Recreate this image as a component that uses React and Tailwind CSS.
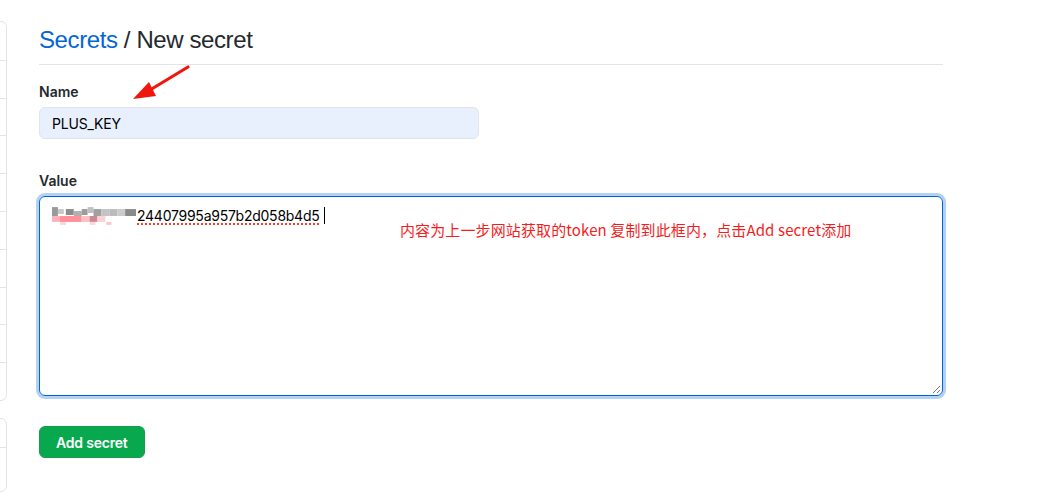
import React from "react";

const sans = "font-['Inter','Liberation_Sans','Noto_Sans_CJK_SC',sans-serif]";

const blurCells = [
  [0, 3, 6, 9, "#9a9a9a"],
  [6, 5, 6, 5, "#c8c8c8"],
  [14, 5, 8, 6, "#8c8c8c"],
  [22, 7, 8, 5, "#b0b0b0"],
  [30, 5, 6, 6, "#9c9c9c"],
  [36, 3, 6, 6, "#c0c0c0"],
  [42, 5, 8, 7, "#a0a0a0"],
  [50, 5, 8, 7, "#c4c4c4"],
  [58, 5, 8, 7, "#bbbbbb"],
  [66, 5, 8, 7, "#cbcbcb"],
  [74, 5, 11, 7, "#8a8a8a"],
  [0, 12, 8, 6, "#ffb3b8"],
  [8, 12, 22, 6, "#ff8f99"],
  [30, 12, 8, 6, "#ffc0c4"],
  [38, 12, 8, 6, "#c98a94"],
  [46, 12, 8, 6, "#ffd0d3"],
  [8, 18, 6, 3, "#ffd6d8"],
  [38, 18, 6, 3, "#ffd6d8"],
  [55, 18, 5, 3, "#ffc4c8"],
];

const Sidebar = () => (
  <div className="w-[7px] shrink-0 overflow-hidden pt-[21px]">
    <div className="w-[200px] -ml-[193px] rounded-md border border-[#e1e4e8]">
      {Array.from({ length: 10 }).map((_, i) => (
        <div
          key={i}
          className={`h-[37.8px] ${i > 0 ? "border-t border-[#e1e4e8]" : ""}`}
        />
      ))}
    </div>
    <div className="w-[200px] -ml-[193px] mt-[17px] rounded-md border border-[#e1e4e8]">
      <div className="h-[28px]" />
      <div className="h-[44px] border-t border-[#e1e4e8]" />
    </div>
  </div>
);

export default function App() {
  return (
    <div className={`relative flex w-[1044px] h-[500px] bg-white overflow-hidden text-[#24292e] ${sans}`}>
      <Sidebar />

      <main className="ml-[32px] w-[904px] pt-[22px]">
        <h2 className="font-['Liberation_Sans',sans-serif] text-[24px] leading-[36px] tracking-[-0.4px] pb-[6px] border-b border-[#e1e4e8]">
          <a className="text-[#0366d6]">Secrets</a> / New secret
        </h2>

        <label className="block mt-[16px] text-[14px] leading-[21px] font-semibold">
          Name
        </label>
        <div className="mt-[5px] w-[440px] h-[32px] flex items-center px-[12px] rounded-md border border-[#e1e4e8] bg-[#e8f0fe] text-[14px] tracking-[-0.2px] text-black">
          PLUS_KEY
        </div>

        <label className="block mt-[31px] text-[14px] leading-[21px] font-semibold">
          Value
        </label>
        <div className="relative mt-[5px] h-[200px] rounded-md border border-[#0366d6] shadow-[0_0_0_3px_rgba(3,102,214,0.3)] px-[12px] py-[8px]">
          <div className="flex items-center h-[20px] text-[14px] tracking-[-0.25px] text-black">
            <svg width="85" height="22" viewBox="0 0 86 22" className="-mt-[1px]">
              {blurCells.map(([x, y, w, h, c], i) => (
                <rect key={i} x={x} y={y} width={w} height={h} fill={c} />
              ))}
            </svg>
            <span className="underline decoration-dotted decoration-[#ff3b30] decoration-2 underline-offset-[3px]">
              24407995a957b2d058b4d5
            </span>
            <span className="ml-[4px] w-px h-[17px] bg-black" />
          </div>
          <svg
            width="10"
            height="10"
            viewBox="0 0 10 10"
            className="absolute right-[1px] bottom-[1px]"
          >
            <path d="M9 2 L2 9 M9 6 L6 9" stroke="#777" strokeWidth="1" />
          </svg>
        </div>

        <button className="mt-[30px] h-[32px] px-[16px] rounded-md bg-[#07a84e] border border-[#1b9a4a] text-white text-[14px] tracking-[-0.2px] font-semibold">
          Add secret
        </button>
      </main>

      <svg
        className="absolute left-0 top-0 pointer-events-none"
        width="1044"
        height="500"
      >
        <line x1="188" y1="67" x2="145" y2="93" stroke="#f0160e" strokeWidth="3.2" strokeLinecap="round" />
        <polygon points="133,99 149,82 156,96" fill="#f0160e" />
      </svg>

      <div className="absolute left-[400px] top-[219px] text-[15px] leading-[22px] tracking-[0.12px] text-[#f51c1c] font-['Noto_Sans_CJK_SC',sans-serif] whitespace-nowrap">
        内容为上一步网站获取的token 复制到此框内，点击Add secret添加
      </div>
    </div>
  );
}
